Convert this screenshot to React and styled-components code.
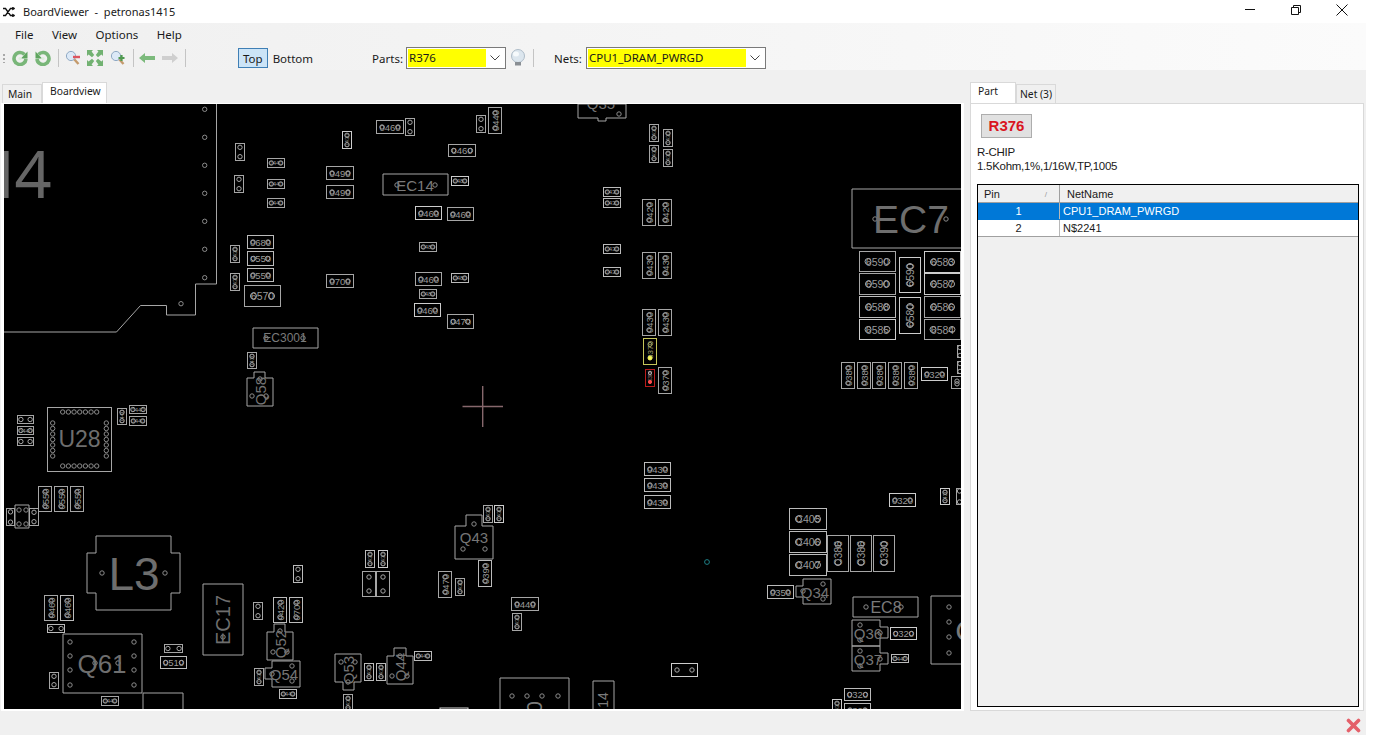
import React from 'react';
import styled, { createGlobalStyle } from 'styled-components';

const GlobalStyle = createGlobalStyle`
  html, body {
    margin: 0;
    padding: 0;
    background: #fff;
    overflow: hidden;
  }
  body {
    font-family: "Noto Sans", "Liberation Sans", sans-serif;
    font-size: 11.5px;
    color: #1a1a1a;
  }
`;

const Window = styled.div`
  display: flex;
  flex-direction: column;
  width: 1366px;
  height: 735px;
  background: #f0f0f0;
`;

const TitleBar = styled.div`
  display: flex;
  align-items: center;
  height: 23px;
  width: 1396px;
  flex: none;
  background: #fff;
  padding-left: 3px;
  box-sizing: border-box;
`;

const TitleText = styled.span`
  margin-left: 7px;
  font-size: 11px;
  white-space: pre;
`;

const WindowButtons = styled.div`
  display: flex;
  margin: 0 48px 3px auto;
  gap: 34px;
`;

const MenuBar = styled.div`
  display: flex;
  align-items: center;
  gap: 18.5px;
  height: 23px;
  flex: none;
  padding-left: 15px;
  background: linear-gradient(to right, #f0f0f0, #f5f5f5 50%, #fbfbfb);
`;

const Toolbar = styled.div`
  display: flex;
  align-items: center;
  height: 24px;
  flex: none;
  background: linear-gradient(to right, #f0f0f0, #f5f5f5 50%, #fbfbfb);
`;

const Grip = styled.div`
  width: 2px;
  height: 9px;
  margin: 0 3.5px 0 3px;
  background: repeating-linear-gradient(to bottom, #a8a8a8 0 2px, transparent 2px 4px);
`;

const ToolIcon = styled.div`
  display: flex;
  justify-content: center;
  width: ${(p) => p.$w || 23}px;
`;

const ToolSep = styled.div`
  width: 1px;
  height: 18px;
  background: #c4c4c4;
  margin: 0 ${(p) => p.$gap || 2}px;
`;

const SideButton = styled.button`
  height: 20px;
  padding: 0 4px;
  font: inherit;
  color: inherit;
  background: ${(p) => (p.$active ? '#cce4f7' : 'transparent')};
  border: 1px solid ${(p) => (p.$active ? '#3f7fb5' : 'transparent')};
`;

const ToolLabel = styled.span`
  margin: ${(p) => p.$margin};
`;

const Combo = styled.div`
  display: flex;
  align-items: center;
  width: ${(p) => p.$w}px;
  height: 22px;
  box-sizing: border-box;
  background: #fff;
  border: 1px solid #7a7a7a;
  padding-left: 1px;
`;

const ComboValue = styled.div`
  flex: 1;
  height: 18px;
  line-height: 17px;
  padding-left: 1px;
  background: #ffff00;
  white-space: nowrap;
`;

const ComboArrow = styled.div`
  display: flex;
  align-items: center;
  justify-content: center;
  width: 19px;
`;

const Main = styled.div`
  flex: 1;
  display: flex;
  min-height: 0;
  padding-top: 12px;
`;

const LeftPane = styled.div`
  display: flex;
  flex-direction: column;
  width: 963px;
  margin-left: 1px;
`;

const TabRow = styled.div`
  display: flex;
  align-items: flex-end;
  height: 21px;
  flex: none;
  padding-left: ${(p) => p.$pad || 0}px;
`;

const Tab = styled.div`
  box-sizing: border-box;
  width: ${(p) => p.$w}px;
  height: ${(p) => (p.$active ? 21 : 19)}px;
  padding: ${(p) => (p.$active ? 1 : 2)}px 0 0 ${(p) => p.$pad}px;
  background: ${(p) => (p.$active ? '#fff' : '#f0f0f0')};
  border: 1px solid #d9d9d9;
  border-bottom: none;
  font-size: 10.3px;
  white-space: nowrap;
`;

const BoardFrame = styled.div`
  display: flex;
  height: 608px;
  box-sizing: border-box;
  padding: 1px 3px 2px 3px;
  background: #fff;
`;

const BoardSvg = styled.svg`
  display: block;
  background: #000;
`;

const RightPane = styled.div`
  display: flex;
  flex-direction: column;
  width: 394px;
  margin-left: 6px;
`;

const PartPanel = styled.div`
  display: flex;
  flex-direction: column;
  height: 608px;
  box-sizing: border-box;
  padding: 10px 4px 3px 6px;
  background: #fff;
  border: 1px solid #d9d9d9;
`;

const PartBadge = styled.div`
  width: 51px;
  height: 24px;
  margin-left: 4px;
  box-sizing: border-box;
  text-align: center;
  line-height: 22px;
  font-family: "Liberation Sans", sans-serif;
  font-weight: bold;
  font-size: 15px;
  color: #d9141e;
  background: #e1e1e1;
  border: 1px solid #adadad;
`;

const PartInfo = styled.div`
  margin-top: 8px;
  font-family: "Liberation Sans", sans-serif;
  font-size: 11.5px;
  line-height: 13.5px;
  letter-spacing: -0.28px;
`;

const PinGrid = styled.div`
  flex: 1;
  margin-top: 11px;
  background: #f0f0f0;
  border: 1.5px solid #000;
  font-family: "Liberation Sans", sans-serif;
  font-size: 11px;
`;

const GridRow = styled.div`
  display: grid;
  grid-template-columns: 82px 1fr;
  height: ${(p) => p.$h || 16}px;
  line-height: ${(p) => p.$lh || 16}px;
  background: ${(p) => (p.$selected ? '#0078d7' : p.$head ? '#f0f0f0' : '#fff')};
  color: ${(p) => (p.$selected ? '#fff' : '#1a1a1a')};
  border-bottom: 1px solid ${(p) => (p.$selected ? '#0078d7' : '#a0a0a0')};
`;

const PinCell = styled.div`
  position: relative;
  padding-left: ${(p) => (p.$head ? 6 : 0)}px;
  text-align: ${(p) => (p.$head ? 'left' : 'center')};
  border-right: 1px solid ${(p) => (p.$head ? '#a0a0a0' : '#b8b8b8')};
`;

const SortMark = styled.span`
  position: absolute;
  top: 0;
  right: 12px;
  font-size: 8px;
  color: #999;
`;

const NameCell = styled.div`
  padding-left: ${(p) => (p.$head ? 7 : 3)}px;
`;

const StatusBar = styled.div`
  display: flex;
  justify-content: flex-end;
  align-items: center;
  height: 24px;
  box-sizing: border-box;
  flex: none;
  padding: 4px 5px 0 0;
`;

// board drawing parts
const Outline = styled.polyline`
  fill: none;
  stroke: ${(p) => p.$stroke || '#a6a6a6'};
  stroke-width: 1;
`;

const Body = styled.rect`
  fill: none;
  stroke: ${(p) => p.$stroke || '#a6a6a6'};
  stroke-width: 1;
`;

const Hole = styled.circle`
  fill: ${(p) => p.$fill || 'none'};
  stroke: ${(p) => p.$stroke || '#8c8c8c'};
  stroke-width: 1;
`;

const RefText = styled.text`
  font-family: ${(p) => p.$font || '"Liberation Sans"'}, sans-serif;
  fill: ${(p) => p.$fill || '#757575'};
  text-anchor: middle;
  dominant-baseline: central;
`;

const Cross = styled.path`
  fill: none;
  stroke: #86676c;
  stroke-width: 1.4;
`;

// x, y, w, h, label, stroke
const chips = [
  [235, 143, 10, 18], [234, 175, 10, 18],
  [267, 158, 18, 10, '0440'], [267, 179, 18, 10, '0440'], [267, 198, 18, 10, '0440'],
  [247, 235, 27, 14, '0680', '#bbb'], [247, 251, 27, 15, '0550', '#bbb'], [247, 268, 27, 14, '0550', '#bbb'],
  [244, 285, 37, 22, '6570'], [230, 245, 10, 18, '0430'], [230, 273, 10, 18, '0430'],
  [247, 352, 10, 17, '0430'],
  [376, 120, 28, 14, '0460'], [405, 118, 10, 18], [342, 131, 10, 18, '0430', '#ccc'],
  [476, 115, 10, 18], [488, 107, 14, 27, '0440'],
  [448, 144, 28, 13, '0460'], [326, 166, 28, 14, '0490'], [326, 185, 28, 14, '0490'],
  [451, 176, 18, 10, '0480', '#ccc'], [415, 206, 27, 14, '0460', '#ccc'], [447, 207, 27, 14, '0460'],
  [419, 242, 18, 10, '0480'], [415, 272, 27, 14, '0460'], [451, 273, 18, 10, '0480', '#bbb'],
  [419, 289, 18, 10, '0480'], [414, 303, 27, 14, '0460', '#ccc'], [447, 314, 27, 15, '0470'],
  [326, 274, 28, 14, '0700'],
  [603, 187, 18, 10, '0430', '#bbb'], [603, 198, 18, 10, '0430', '#bbb'], [603, 244, 18, 10, '0430', '#bbb'], [603, 267, 18, 10, '0430', '#bbb'],
  [649, 124, 10, 18, '0430'], [649, 145, 10, 18, '0430'], [663, 129, 10, 18, '0430'], [663, 149, 10, 18, '0430'],
  [642, 199, 14, 27, '0420'], [658, 199, 14, 27, '0420'],
  [642, 252, 14, 27, '0430'], [658, 252, 14, 27, '0430'],
  [642, 309, 14, 27, '0430'], [658, 309, 14, 27, '0430'],
  [658, 367, 14, 27, '0370'],
  [859, 251, 37, 21, '6590'], [859, 273, 37, 22, '6590'], [859, 296, 37, 22, '6588', '#bbb'], [859, 319, 37, 21, '6585', '#ccc'],
  [899, 257, 22, 36, '6590', '#ccc'], [899, 297, 22, 37, '6580', '#ccc'],
  [924, 251, 37, 22, '6583', '#ccc'], [924, 273, 37, 22, '6587', '#ccc'], [924, 296, 37, 22, '6586'], [924, 319, 37, 21, '6584'],
  [841, 362, 14, 27, '0380'], [857, 362, 14, 27, '0380'], [872, 362, 14, 27, '0380'], [888, 362, 14, 27, '0380'], [904, 362, 14, 27, '0380'],
  [921, 367, 27, 14, '0320', '#ccc'], [957, 345, 6, 13], [957, 361, 6, 13], [951, 376, 12, 13],
  [17, 415, 17, 9], [17, 426, 17, 9, '0440'], [17, 437, 17, 9],
  [117, 408, 10, 17, '0440'], [129, 405, 18, 9, '0440'], [129, 416, 18, 10, '0440'],
  [38, 486, 14, 26, '0550'], [54, 486, 14, 26, '0550'], [70, 486, 14, 26, '0550'],
  [6, 508, 9, 18], [29, 508, 10, 18],
  [293, 565, 10, 18, null, '#bbb'], [253, 602, 10, 18], [273, 597, 14, 26, '0420', '#bbb'], [289, 597, 14, 26, '0700', '#bbb'],
  [44, 595, 14, 26, '0460'], [60, 595, 14, 26, '0460', '#bbb'], [47, 624, 18, 9, null, '#bbb'],
  [164, 644, 19, 9], [160, 656, 27, 13, '0510', '#bbb'], [49, 672, 10, 17], [101, 696, 18, 10, '0440'],
  [254, 668, 10, 18, '0430'], [279, 689, 18, 10, '0440', '#bbb'],
  [483, 505, 10, 18, '0430'], [494, 505, 10, 18, '0430', '#ccc'], [478, 560, 14, 27, '0390', '#bbb'],
  [365, 550, 10, 18, '0430', '#bbb'], [378, 550, 10, 18, '0430', '#ccc'],
  [362, 571, 14, 26], [376, 571, 14, 26],
  [438, 571, 14, 27, '0470'], [455, 578, 10, 18, '0430'],
  [511, 597, 28, 14, '0440'], [512, 613, 10, 18, '0430'],
  [364, 663, 10, 18, '0430', '#bbb'], [376, 663, 10, 18, '0430', '#bbb'], [414, 651, 18, 10, '0440', '#bbb'], [343, 694, 10, 18, '0430'],
  [644, 462, 27, 14, '0430', '#bbb'], [644, 478, 27, 14, '0430', '#bbb'], [644, 495, 27, 14, '0430', '#bbb'],
  [789, 508, 38, 22, 'C405', '#bbb'], [789, 531, 38, 22, 'C406', '#bbb'], [789, 554, 38, 22, 'C407', '#bbb'],
  [827, 535, 22, 37, 'C386'], [850, 535, 22, 37, 'C386'], [873, 535, 22, 37, 'C390'],
  [767, 585, 27, 14, '0350', '#bbb'], [890, 627, 27, 13, '0320', '#ccc'], [891, 654, 18, 9, '0440', '#bbb'],
  [889, 493, 27, 14, '0320', '#ccc'], [940, 488, 10, 17, '0430', '#ccc'], [956, 488, 7, 17],
  [671, 663, 27, 14, null, '#ccc'], [844, 688, 27, 13, '0320', '#bbb'], [832, 699, 10, 18, '0430', '#ccc'], [844, 703, 27, 14, '0320', '#bbb'],
];

const packages = [
  // outlined parts with holes and a reference name
  { points: '578,104 578,118 598,118 598,121 606,121 606,118 626,118 626,104', holes: [[619, 114]], text: ['Q35', 601, 103, 15] },
  { points: '247,378 247,406 273,406 273,378 265,378 265,372 254,372 254,378', holes: [[260, 379], [252, 396], [266, 396]], text: ['Q58', 260, 391, 15, -90] },
  { points: '267,632 267,660 293,660 293,632 285,632 285,624 274,624 274,632', holes: [[280, 631], [273, 652], [287, 652]], text: ['Q52', 280, 644, 15, -90] },
  { points: '272,661 272,668 265,668 265,679 272,679 272,687 300,687 300,661', holes: [[272, 674], [292, 666], [292, 681]], text: ['Q54', 284, 674, 15] },
  { points: '455,526 455,559 493,559 493,526 482,526 482,515 466,515 466,526', holes: [[474, 524], [463, 549], [485, 549]], text: ['Q43', 474, 537, 15] },
  { points: '335,654 335,682 343,682 343,690 354,690 354,682 361,682 361,654', holes: [[341, 662], [355, 662], [348, 682]], text: ['Q53', 348, 670, 15, -90] },
  { points: '387,656 387,684 413,684 413,656 406,656 406,648 394,648 394,656', holes: [[400, 656], [392, 676], [407, 676]], text: ['Q44', 400, 667, 15, -90] },
  { points: '803,579 803,586 796,586 796,597 803,597 803,604 831,604 831,579', holes: [[803, 591], [823, 584], [823, 599]], text: ['Q34', 815, 592, 15] },
  { points: '852,620 852,646 880,646 880,638 888,638 888,627 880,627 880,620', holes: [[860, 625], [860, 640], [880, 633]], text: ['Q36', 868, 633, 15] },
  { points: '852,646 852,671 880,671 880,664 888,664 888,653 880,653 880,646', holes: [[860, 651], [860, 666], [880, 659]], text: ['Q37', 868, 659, 15] },
  { points: '87,553 87,593 96,593 96,610 171,610 171,593 180,593 180,553 171,553 171,536 96,536 96,553', holes: [[102, 573], [165, 573]], text: ['L3', 134, 574, 46], fill: '#6e6e6e' },
  { points: '203,584 203,655 243,655 243,584', holes: [[223, 637]], text: ['EC17', 223, 620, 20, -90], fill: '#6e6e6e' },
  { points: '852,189 852,248 963,248 963,189', holes: [[875, 219], [946, 219]], text: ['EC7', 911, 219, 39], fill: '#6e6e6e' },
  { points: '383,174 383,195 448,195 448,174', holes: [[397, 185], [435, 185]], text: ['EC14', 415, 185, 15], fill: '#7a7a7a' },
  { points: '253,328 253,348 318,348 318,328', holes: [[266, 338], [303, 338]], text: ['EC3001', 285, 338, 12], fill: '#7a7a7a' },
  { points: '853,597 853,617 918,617 918,597', holes: [[866, 607], [901, 607]], text: ['EC8', 886, 607, 16], fill: '#7a7a7a' },
  { points: '63,634 63,693 142,693 142,634', holes: [[70, 642], [70, 656], [70, 670], [70, 685], [134, 642], [134, 656], [134, 670], [134, 685], [95, 663], [118, 663]], text: ['Q61', 102, 664, 26], fill: '#6e6e6e' },
  { points: '143,711 143,693 183,693 183,711', holes: [], text: ['8', 163, 713, 14, -90], fill: '#7a7a7a' },
  { points: '500,711 500,678 569,678 569,711', holes: [[512, 696], [527, 696], [542, 696], [558, 696]], text: ['0', 534, 707, 22, -90], fill: '#7a7a7a' },
  { points: '593,711 593,681 614,681 614,711', holes: [], text: ['14', 603, 700, 14, -90], fill: '#7a7a7a' },
  { points: '963,596 931,596 931,664 963,664', holes: [[949, 607], [949, 622], [949, 637], [949, 653]], text: ['C', 966, 630, 30], fill: '#7a7a7a' },
  { points: '15,505 15,528 29,528 29,505', holes: [[19, 510], [26, 510], [19, 524], [26, 524]] },
];

const range = (n, fn) => Array.from({ length: n }, (_, i) => fn(i));

const u28Holes = [
  ...range(7, (i) => [62.7 + i * 5.67, 412]),
  ...range(7, (i) => [62.7 + i * 5.67, 466]),
  ...range(7, (i) => [52.7, 423 + i * 5.5]),
  ...range(7, (i) => [106.3, 423 + i * 5.5]),
];

const sheetHoles = [
  ...[109.3, 137.3, 165.3, 193.3, 221.3, 249.3, 277.7].map((y) => [204.7, y]),
  [181, 303.7],
];

const Chip = ({ x, y, w, h, label, stroke }) => {
  const vertical = h > w;
  const short = vertical ? w : h;
  const inset = short * 0.43;
  const r = short > 18 ? 3 : 2.2;
  const cx = x + w / 2;
  const cy = y + h / 2;
  const a = vertical ? [cx, y + inset] : [x + inset, cy];
  const b = vertical ? [cx, y + h - inset] : [x + w - inset, cy];
  const size = short >= 20 ? 10.5 : short >= 13 ? 9.5 : 6;
  return (
    <g>
      <Body x={x + 0.5} y={y + 0.5} width={w - 1} height={h - 1} $stroke={stroke} />
      <Hole cx={a[0]} cy={a[1]} r={r} $stroke="#a8a8a8" />
      <Hole cx={b[0]} cy={b[1]} r={r} $stroke="#a8a8a8" />
      {label && (
        <RefText
          x={cx}
          y={cy}
          fontSize={size}
          $fill="#9a9a9a"
          transform={vertical ? `rotate(-90 ${cx} ${cy})` : undefined}
        >
          {label}
        </RefText>
      )}
    </g>
  );
};

const Board = () => (
  <BoardSvg width="957" height="605" viewBox="4 104 957 605">
    <Outline points="216.5,104 216.5,284 195.5,284 195.5,315 166.5,315 166.5,305.5 140.5,305.5 116.5,332 4,332" />
    {sheetHoles.map(([cx, cy]) => (
      <Hole key={`${cx}-${cy}`} cx={cx} cy={cy} r={2.2} />
    ))}
    <RefText y={173} fontSize={65} $fill="#666" $font='"Noto Sans"'>
      <tspan x={4}>1</tspan>
      <tspan x={33}>4</tspan>
    </RefText>

    <Body x={47.5} y={407.5} width={64} height={64} />
    {u28Holes.map(([cx, cy]) => (
      <Hole key={`${cx}-${cy}`} cx={cx} cy={cy} r={2.2} />
    ))}
    <RefText x={79.5} y={439} fontSize={23} $fill="#6e6e6e">
      U28
    </RefText>

    {packages.map((p) => {
      const label = p.text;
      return (
        <g key={p.points}>
          <Outline points={`${p.points} ${p.points.split(' ')[0]}`} />
          {p.holes.map(([cx, cy]) => (
            <Hole key={`${cx}-${cy}`} cx={cx} cy={cy} r={2.2} />
          ))}
          {label && (
            <RefText
              x={label[1]}
              y={label[2]}
              fontSize={label[3]}
              $fill={p.fill}
              transform={label[4] ? `rotate(${label[4]} ${label[1]} ${label[2]})` : undefined}
            >
              {label[0]}
            </RefText>
          )}
        </g>
      );
    })}

    {chips.map(([x, y, w, h, label, stroke]) => (
      <Chip key={`${x}-${y}`} x={x} y={y} w={w} h={h} label={label} stroke={stroke} />
    ))}

    {/* selected pins */}
    <Body x={643.5} y={338.5} width={13} height={26} $stroke="#c6c65a" />
    <RefText x={650} y={350} fontSize={8} $fill="#a0a070" transform="rotate(-90 650 350)">
      0370
    </RefText>
    <Hole cx={650} cy={344.5} r={2} $stroke="#a8a860" />
    <Hole cx={650} cy={358} r={2} $fill="#f4f45a" $stroke="#f4f45a" />
    <Body x={645.5} y={369.5} width={9} height={17} $stroke="#b81c1c" />
    <RefText x={650} y={376} fontSize={5} $fill="#a88" transform="rotate(-90 650 376)">
      0380
    </RefText>
    <Hole cx={650} cy={373} r={1.6} $stroke="#aaa" />
    <Hole cx={650} cy={382} r={1.6} $fill="#ff4a4a" $stroke="#ff4a4a" />

    <Hole cx={707} cy={562} r={2.4} $stroke="#1d7f86" />
    <Body x={440} y={708} width={28} height={2} $stroke="#ddd" />
    <Cross d="M462.5 406.5H503M482.7 386V427" />
  </BoardSvg>
);

const AppGlyph = () => (
  <svg width="13" height="10" viewBox="0 0 13 10" fill="none" stroke="#111" strokeWidth="1.3">
    <path d="M0 1.5h2.5l5 7h3M0 8.5h2.5l5-7h3" />
    <path d="M9.5 0l2.5 1.5-2.5 1.5zM9.5 7l2.5 1.5-2.5 1.5z" fill="#111" strokeWidth="0.6" />
  </svg>
);

const MinGlyph = () => (
  <svg width="12" height="12" viewBox="0 0 12 12" stroke="#111" fill="none">
    <path d="M1 5.5h10" />
  </svg>
);

const RestoreGlyph = () => (
  <svg width="12" height="12" viewBox="0 0 12 12" stroke="#111" fill="none">
    <path d="M1.5 3.5h7v7h-7zM3.5 3.5v-2h7v7h-2" />
  </svg>
);

const CloseGlyph = () => (
  <svg width="12" height="12" viewBox="0 0 12 12" stroke="#111" fill="none">
    <path d="M.5.5l11 11M11.5.5l-11 11" />
  </svg>
);

const RefreshIcon = ({ flip }) => (
  <svg width="16" height="16" viewBox="0 0 16 16" fill="none" style={{ transform: flip ? 'scaleX(-1)' : 'none' }}>
    <path d="M12.5 4.5A6 6 0 1 0 14 9" stroke="#79b679" strokeWidth="3.6" />
    <path d="M15.5 1.5v7H9z" fill="#5fa55f" />
    <circle cx="8" cy="8.5" r="1.6" fill="#dcefdc" />
  </svg>
);

const ZoomIcon = ({ plus }) => (
  <svg width="16" height="16" viewBox="0 0 16 16" fill="none">
    <path d="M9 9l4.5 5" stroke="#c49a6c" strokeWidth="2.4" />
    <circle cx="6" cy="6" r="4.6" fill="#dce9f7" stroke="#8fa9c4" />
    {plus ? (
      <path d="M11.5 5v6M8.5 8h6" stroke="#4f9a4f" strokeWidth="2.2" />
    ) : (
      <path d="M8 7h7" stroke="#dd5560" strokeWidth="2.4" />
    )}
  </svg>
);

const FitIcon = () => (
  <svg width="16" height="16" viewBox="0 0 16 16" fill="#72b272">
    <path d="M0 0h6L4.6 1.6 7.2 5 5 7.2 1.6 4.6 0 6zM16 0v6l-1.6-1.4L11 7.2 8.8 5l2.6-3.4L10 0zM0 16v-6l1.6 1.4L5 8.8 7.2 11l-2.6 3.4L6 16zM16 16h-6l1.4-1.6L8.8 11 11 8.8l3.4 2.6L16 10z" />
  </svg>
);

const ArrowIcon = ({ color, flip }) => (
  <svg width="16" height="10" viewBox="0 0 16 10" style={{ transform: flip ? 'scaleX(-1)' : 'none' }}>
    <path d="M0 5l6-5v3h10v4H6v3z" fill={color} />
  </svg>
);

const BulbIcon = () => (
  <svg width="16" height="18" viewBox="0 0 16 18">
    <circle cx="8" cy="7" r="6.5" fill="#dce6ee" stroke="#aebcc8" />
    <ellipse cx="6" cy="5" rx="3" ry="2.5" fill="#f6fafc" />
    <path d="M5 13h6v3.5H5z" fill="#8a8f94" />
  </svg>
);

const Chevron = () => (
  <svg width="10" height="6" viewBox="0 0 10 6" fill="none" stroke="#444">
    <path d="M.5.5L5 5 9.5.5" />
  </svg>
);

const CloseMark = () => (
  <svg width="15" height="15" viewBox="0 0 15 15" stroke="#e4606a" strokeWidth="3.6" strokeLinecap="round">
    <path d="M2.5 2.5l10 10M12.5 2.5l-10 10" />
  </svg>
);

const App = () => (
  <>
    <GlobalStyle />
    <Window>
      <TitleBar>
        <AppGlyph />
        <TitleText>{'BoardViewer  -  petronas1415'}</TitleText>
        <WindowButtons>
          <MinGlyph />
          <RestoreGlyph />
          <CloseGlyph />
        </WindowButtons>
      </TitleBar>
      <MenuBar>
        <span>File</span>
        <span>View</span>
        <span>Options</span>
        <span>Help</span>
      </MenuBar>
      <Toolbar>
        <Grip />
        <ToolIcon $w={23}><RefreshIcon /></ToolIcon>
        <ToolIcon $w={23}><RefreshIcon flip /></ToolIcon>
        <ToolSep $gap={3} />
        <ToolIcon $w={23}><ZoomIcon /></ToolIcon>
        <ToolIcon $w={21}><FitIcon /></ToolIcon>
        <ToolIcon $w={25}><ZoomIcon plus /></ToolIcon>
        <ToolSep />
        <ToolIcon $w={23}><ArrowIcon color="#7cba7c" /></ToolIcon>
        <ToolIcon $w={23}><ArrowIcon color="#cfcfcf" flip /></ToolIcon>
        <ToolSep $gap={3} />
        <ToolLabel $margin="0 0 0 49.5px" />
        <SideButton $active>Top</SideButton>
        <SideButton>Bottom</SideButton>
        <ToolLabel $margin="0 3px 0 54px">Parts:</ToolLabel>
        <Combo $w={100}>
          <ComboValue>R376</ComboValue>
          <ComboArrow><Chevron /></ComboArrow>
        </Combo>
        <ToolIcon $w={24}><BulbIcon /></ToolIcon>
        <ToolSep $gap={3} />
        <ToolLabel $margin="0 4px 0 17px">Nets:</ToolLabel>
        <Combo $w={180}>
          <ComboValue>CPU1_DRAM_PWRGD</ComboValue>
          <ComboArrow><Chevron /></ComboArrow>
        </Combo>
      </Toolbar>
      <Main>
        <LeftPane>
          <TabRow $pad={1}>
            <Tab $w={40} $pad={5}>Main</Tab>
            <Tab $w={65} $pad={7} $active>Boardview</Tab>
          </TabRow>
          <BoardFrame>
            <Board />
          </BoardFrame>
        </LeftPane>
        <RightPane>
          <TabRow>
            <Tab $w={46} $pad={7} $active>Part</Tab>
            <Tab $w={40} $pad={3}>Net (3)</Tab>
          </TabRow>
          <PartPanel>
            <PartBadge>R376</PartBadge>
            <PartInfo>
              R-CHIP
              <br />
              1.5Kohm,1%,1/16W,TP,1005
            </PartInfo>
            <PinGrid>
              <GridRow $head $h={17} $lh={19}>
                <PinCell $head>Pin<SortMark>/</SortMark></PinCell>
                <NameCell $head>NetName</NameCell>
              </GridRow>
              <GridRow $selected>
                <PinCell>1</PinCell>
                <NameCell>CPU1_DRAM_PWRGD</NameCell>
              </GridRow>
              <GridRow>
                <PinCell>2</PinCell>
                <NameCell>N$2241</NameCell>
              </GridRow>
            </PinGrid>
          </PartPanel>
        </RightPane>
      </Main>
      <StatusBar>
        <CloseMark />
      </StatusBar>
    </Window>
  </>
);

export default App;
